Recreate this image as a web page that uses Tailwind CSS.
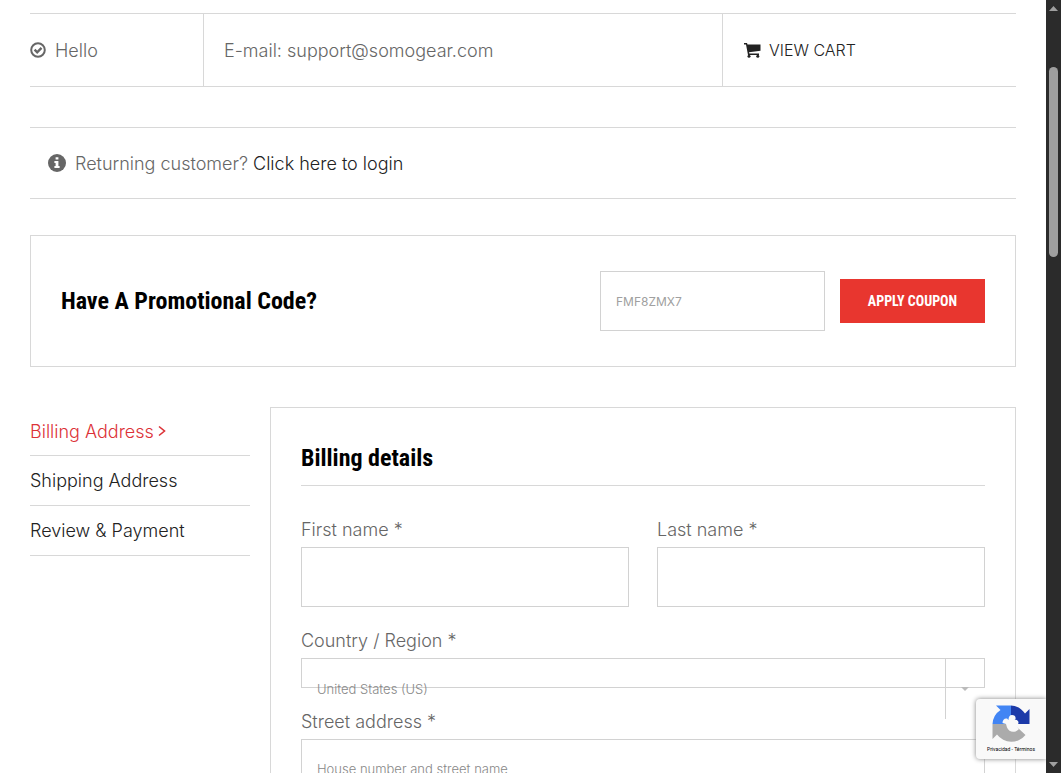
<!DOCTYPE html>
<html lang="en">
<head>
    <meta charset="UTF-8">
    <meta name="viewport" content="width=device-width, initial-scale=1.0">
    <title>Checkout - Somogear</title>
    <script src="https://cdn.jsdelivr.net/npm/@tailwindcss/browser@4"></script>
</head>
<body class="flex h-screen overflow-hidden bg-white font-['Inter',sans-serif] text-[18px] font-light text-[#666666]">
    <div class="relative min-w-0 flex-1 overflow-hidden">
        <main class="px-[30px] pt-[13px]">

            <!-- Top bar -->
            <div class="flex h-[74px] items-stretch border-y border-[#d8d8d8]">
                <div class="flex w-[174px] items-center gap-[9px] border-r border-[#d8d8d8]">
                    <svg class="h-4 w-4" viewBox="0 0 16 16" fill="none" stroke="#666666" stroke-width="2" aria-hidden="true">
                        <circle cx="8" cy="8" r="6.8"/>
                        <path d="M4.6 7.7l2.6 2.6 4.3-4.4" stroke-width="2.4"/>
                    </svg>
                    <span>Hello</span>
                </div>
                <div class="flex flex-1 items-center border-r border-[#d8d8d8] px-5">E-mail: support@somogear.com</div>
                <div class="flex w-[293px] items-center px-5">
                    <a href="#" class="flex items-center gap-2 text-base text-[#222222]">
                        <svg class="h-4 w-[18px]" viewBox="0 0 18 16" fill="#222222" aria-hidden="true">
                            <path d="M1 1.100h3l.5 1.400h13v6.300L6 10.200l.3 1.200H16v1.500H5L3 2.600H1z"/>
                            <circle cx="6" cy="14.2" r="1.5"/>
                            <circle cx="14.8" cy="14.2" r="1.5"/>
                        </svg>
                        VIEW CART
                    </a>
                </div>
            </div>

            <!-- Login notice -->
            <div class="mt-10 flex h-[72px] items-center gap-[9px] border-y border-[#d8d8d8] px-[18px]">
                <svg class="h-[18px] w-[18px]" viewBox="0 0 18 18" aria-hidden="true">
                    <circle cx="9" cy="9" r="9" fill="#666666"/>
                    <path fill="#ffffff" d="M7.6 3.2h2.8v2.4H7.6zM6.4 7h4v5h1.2v2H6.4v-2h1.2V9H6.4z"/>
                </svg>
                <p>Returning customer? <a href="#" class="text-[#222222]">Click here to login</a></p>
            </div>

            <!-- Coupon -->
            <form class="mt-9 flex h-[132px] items-center gap-[15px] border border-[#d8d8d8] px-[30px]">
                <h2 class="flex-1 font-['Roboto_Condensed',sans-serif] text-2xl font-bold text-black">Have A Promotional Code?</h2>
                <input type="text" aria-label="Coupon code" placeholder="FMF8ZMX7" class="h-[60px] w-[225px] border border-[#d2d2d2] px-[15px] text-xs font-normal placeholder:text-[#a0a0a0]">
                <button type="button" class="h-11 w-[145px] bg-[#e8362f] font-['Roboto_Condensed',sans-serif] text-sm font-bold whitespace-nowrap text-white">APPLY COUPON</button>
            </form>

            <div class="mt-10 flex items-start gap-5">
                <!-- Steps -->
                <nav class="w-[220px] shrink-0 text-[#222222]">
                    <a href="#" class="flex h-[49px] items-center gap-1 border-b border-[#d8d8d8] text-[#dc3237]">
                        Billing Address
                        <svg class="h-3 w-2" viewBox="0 0 8 12" fill="none" stroke="#dc3237" stroke-width="1.6" aria-hidden="true"><path d="M1 1.5L6.500 6 1 10.500"/></svg>
                    </a>
                    <a href="#" class="flex h-[50px] items-center border-b border-[#d8d8d8]">Shipping Address</a>
                    <a href="#" class="flex h-[50px] items-center border-b border-[#d8d8d8]">Review &amp; Payment</a>
                </nav>

                <!-- Billing form -->
                <form class="min-w-0 flex-1 border border-[#d8d8d8] p-[30px]">
                    <h3 class="mb-[27px] h-12 border-b border-[#d8d8d8] font-['Roboto_Condensed',sans-serif] text-2xl leading-10 font-bold text-black">Billing details</h3>
                    <div class="flex flex-col gap-[17px] leading-[34px]">
                        <div class="grid grid-cols-2 gap-7">
                            <div>
                                <label for="first-name" class="block">First name *</label>
                                <input id="first-name" type="text" class="block h-[60px] w-full border border-[#d2d2d2] px-[15px] text-[13px]">
                            </div>
                            <div>
                                <label for="last-name" class="block">Last name *</label>
                                <input id="last-name" type="text" class="block h-[60px] w-full border border-[#d2d2d2] px-[15px] text-[13px]">
                            </div>
                        </div>
                        <div>
                            <label for="country" class="block">Country / Region *</label>
                            <div class="flex h-[30px] items-start border border-[#d2d2d2]">
                                <select id="country" class="h-[60px] min-w-0 flex-1 appearance-none bg-transparent px-[15px] text-[13px] text-[#888888]">
                                    <option>United States (US)</option>
                                </select>
                                <span class="grid h-[60px] w-[39px] place-items-center border-l border-[#d2d2d2]">
                                    <svg class="h-1 w-2" viewBox="0 0 8 4" fill="#bbbbbb" aria-hidden="true"><path d="M0 0h8L4 4z"/></svg>
                                </span>
                            </div>
                        </div>
                        <div>
                            <label for="street" class="block">Street address *</label>
                            <input id="street" type="text" placeholder="House number and street name" class="block h-[60px] w-full border border-[#d2d2d2] px-[15px] text-[13px] placeholder:text-[#888888]">
                        </div>
                    </div>
                </form>
            </div>
        </main>

        <!-- reCAPTCHA badge -->
        <div class="absolute right-0 bottom-[14px] flex h-[60px] w-[70px] flex-col items-center rounded-l-sm bg-[#f9f9f9] pt-[6px] shadow-[0_0_5px_#808080]">
            <svg class="h-[38px] w-[38px] shrink-0" viewBox="0 0 38 38" aria-hidden="true">
                <path fill="#4285f4" d="M19 .5H4l4.500 4.500A18 18 0 0 0 .5 19H14l5-5z"/>
                <path fill="#1c3aa9" d="M37.500 19V4l-4.500 4.500A18 18 0 0 0 19 .5V14l5 5z"/>
                <path fill="#ababab" d="M.5 19v15l4.500-4.500A18 18 0 0 0 33.500 30L26 23l-6-4z"/>
                <path fill="#f9f9f9" d="M14 19l-3.500-1c0-3 2-5 4.500-4.500l1.500 1.500c0-3 1-5 3.500-5s4 1.500 3.500 4l-1 1c2-.5 4 .5 4 2.500 0 1.500-1 2.500-3 2.500l3.500 4c-4 4.500-10 3.500-12-1.500z"/>
            </svg>
            <div class="mt-[2px] font-['Roboto',sans-serif] text-[5px] leading-[8px] font-normal whitespace-nowrap text-black">
                <a href="#">Privacidad</a> - <a href="#">Términos</a>
            </div>
        </div>
    </div>

    <!-- Scrollbar -->
    <div class="flex w-[15px] shrink-0 flex-col items-center justify-between bg-[#2b2b2b] py-[6px]" aria-hidden="true">
        <svg class="h-[5px] w-[9px]" viewBox="0 0 9 5" fill="#9f9f9f"><path d="M0 5h9L4.500 0z"/></svg>
        <div class="flex w-full flex-1 flex-col items-center pt-14">
            <div class="h-[190px] w-[9px] rounded-full bg-[#9f9f9f]"></div>
        </div>
        <svg class="h-[5px] w-[9px]" viewBox="0 0 9 5" fill="#9f9f9f"><path d="M0 0h9L4.500 5z"/></svg>
    </div>
</body>
</html>
